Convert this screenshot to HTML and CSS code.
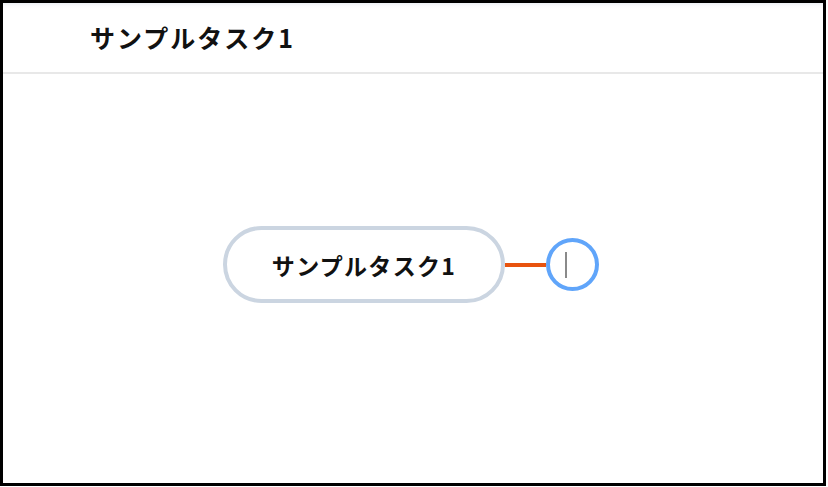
FILE: index.html
```html
<!DOCTYPE html>
<html lang="ja">
<head>
<meta charset="utf-8">
<link rel="stylesheet" href="styles.css">
</head>
<body>
<div class="frame">
  <header class="header">
    <h1 class="title">サンプルタスク1</h1>
  </header>
  <main class="canvas">
    <div class="map">
      <div class="node">サンプルタスク1</div>
      <div class="edge"></div>
      <div class="new-node"><span class="caret"></span></div>
    </div>
  </main>
</div>
</body>
</html>
```

FILE: styles.css
```css
html, body {
  margin: 0;
  padding: 0;
  background: #fff;
}
body {
  font-family: "Noto Sans CJK JP", "Noto Sans", sans-serif;
  color: #111;
}
.frame {
  box-sizing: border-box;
  width: 826px;
  height: 486px;
  border: 3px solid #000;
  display: flex;
  flex-direction: column;
  background: #fff;
}
.header {
  height: 69px;
  flex: none;
  display: flex;
  align-items: center;
  padding-left: 87px;
  border-bottom: 2px solid #e8e8e8;
  background: linear-gradient(to bottom, #eef1f5 0px, #fbfcfd 3px, #fff 6px);
}
.title {
  margin: 0;
  font-size: 25px;
  font-weight: 700;
  line-height: 1;
  letter-spacing: 2px;
}
.canvas {
  position: relative;
  flex: 1;
}
.map {
  position: absolute;
  left: 220px;
  top: 152px;
  display: flex;
  align-items: center;
}
.node {
  box-sizing: border-box;
  width: 282px;
  height: 77px;
  border: 4px solid #cbd5e1;
  border-radius: 39px;
  display: flex;
  align-items: center;
  justify-content: center;
  font-size: 23px;
  font-weight: 700;
  letter-spacing: 1.3px;
  color: #111;
}
.edge {
  width: 41px;
  height: 4px;
  background: #e8530e;
}
.new-node {
  box-sizing: border-box;
  width: 53px;
  height: 53px;
  border: 4px solid #60a5fa;
  border-radius: 50%;
  display: flex;
  align-items: center;
  padding-left: 15px;
}
.caret {
  width: 2px;
  height: 26px;
  background: #8a8a8a;
}
```
